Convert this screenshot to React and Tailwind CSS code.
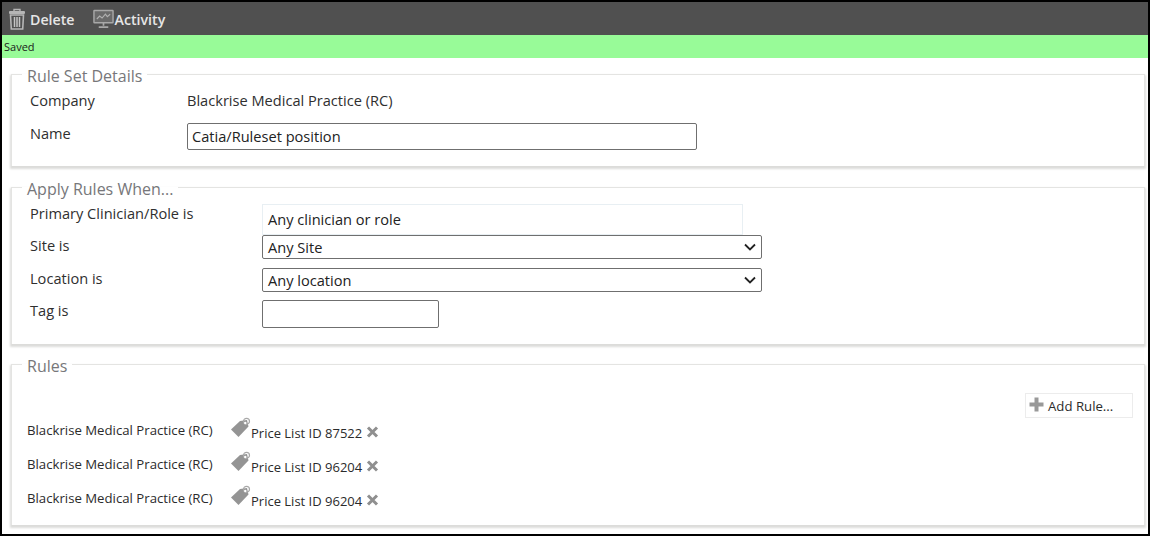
import React from "react";

function Trash() {
  return (
    <svg width="18" height="22" viewBox="0 0 18 22" className="shrink-0">
      <path d="M6 3V1.500h6V3" fill="none" stroke="#b5b5b5" strokeWidth="1.400" />
      <rect x="1" y="3" width="16" height="3" rx="1" fill="#b5b5b5" />
      <path d="M2.500 7h13l-.8 14H3.300z" fill="none" stroke="#b5b5b5" strokeWidth="1.600" />
      <path d="M6.500 9v10M9 9v10M11.500 9v10" stroke="#c4c4c4" strokeWidth="1.500" />
    </svg>
  );
}

function Monitor() {
  return (
    <svg width="21" height="20" viewBox="0 0 22 20" className="shrink-0">
      <rect x="1" y="1" width="20" height="13" rx="0.500" fill="#6a6a6a" stroke="#a8a8a8" strokeWidth="1.500" />
      <path d="M4 10l3-3 2.500 2L13 5l2 2.500L18 5" fill="none" stroke="#b0b0b0" strokeWidth="1.200" />
      <path d="M11 14v3M6 18.500h10" stroke="#a8a8a8" strokeWidth="1.800" />
    </svg>
  );
}

function Tag() {
  return (
    <svg width="21" height="21" viewBox="0 0 21 21" className="shrink-0 mb-[12px]">
      <path d="M10 4L17 3l1.500 6.500L8.500 20 1 12.500z" fill="#949494" />
      <circle cx="16.500" cy="4.300" r="3" fill="none" stroke="#a8a8a8" strokeWidth="1.200" />
      <circle cx="15.300" cy="6" r="1.200" fill="#ffffff" />
    </svg>
  );
}

function Cross() {
  return (
    <svg width="13" height="12" viewBox="0 0 13 12" className="block">
      <path d="M2 1.500l9 9M11 1.500l-9 9" stroke="#8f8f8f" strokeWidth="3" />
    </svg>
  );
}

function Plus() {
  return (
    <svg width="15" height="15" viewBox="0 0 15 15" className="shrink-0 mb-[3px]">
      <path d="M5.500 0.500h4v5h5v4h-5v5h-4v-5h-5v-4h5z" fill="#999999" />
    </svg>
  );
}

function Chevron() {
  return (
    <svg width="12" height="8" viewBox="0 0 12 8" className="shrink-0">
      <path d="M1 1.500l5 5 5-5" fill="none" stroke="#222222" strokeWidth="1.800" />
    </svg>
  );
}

function Section({ title, className, children }) {
  return (
    <fieldset className={"ml-[9px] mr-[3px] border border-[#e4e4e2] border-b-0 shadow-[0_2px_2px_1px_#dcdcda] bg-white " + className}>
      <legend className="ml-[10px] px-[5px] text-[16px] leading-[18px] text-[#77777a]">
        <span className="block translate-y-[2px]">{title}</span>
      </legend>
      {children}
    </fieldset>
  );
}

function SelectBox({ label }) {
  return (
    <div className="w-[500px] h-[24px] border border-[#6f6f6f] rounded-[2px] flex items-center justify-between pl-[5px] pr-[5px] text-[14.600px] text-[#222]">
      <span className="mt-[2px]">{label}</span>
      <Chevron />
    </div>
  );
}

function Rule({ id }) {
  return (
    <div className="flex items-center h-[34px] pl-[15px] text-[13px] text-[#2b2b2b]">
      <span className="w-[203px] text-[13.200px] -translate-y-[2px]">Blackrise Medical Practice (RC)</span>
      <Tag />
      <span className="mt-[1px]">Price List ID {id}</span>
      <span className="ml-[4px] mb-[2px]"><Cross /></span>
    </div>
  );
}

export default function App() {
  return (
    <div className="w-[1150px] h-[536px] overflow-hidden border-2 border-black bg-white font-['Open_Sans',sans-serif]">
      <div className="h-[33px] bg-[#505050] flex items-center pl-[6px] text-[14.200px] font-semibold text-[#e6e6e6]">
        <Trash />
        <span className="ml-[4px] mt-[2px]">Delete</span>
        <span className="ml-[18px]"><Monitor /></span>
        <span className="ml-[1px] mt-[2px]">Activity</span>
      </div>
      <div className="h-[23px] bg-[#98fb98] flex items-center pl-[2px] pt-[1px] text-[11px] text-[#1a1a1a]">Saved</div>

      <Section title="Rule Set Details" className="mt-[7px] h-[101px]">
        <div className="flex items-center h-[24px] pl-[18px] mt-[6px] text-[14.600px] text-[#2f2f2f]">
          <span className="w-[157px]">Company</span>
          <span>Blackrise Medical Practice (RC)</span>
        </div>
        <div className="flex items-start mt-[10px] pl-[18px] text-[14.600px] text-[#2f2f2f]">
          <span className="w-[157px]">Name</span>
          <div className="w-[510px] h-[27px] border border-[#6f6f6f] rounded-[2px] flex items-center pl-[4px] pt-[1px] text-[#222]">Catia/Ruleset position</div>
        </div>
      </Section>

      <Section title="Apply Rules When..." className="mt-[12px] h-[166px]">
        <div className="flex flex-col pl-[18px] mt-[5px] text-[14.600px] text-[#2f2f2f]">
          <div className="flex items-start h-[34px]">
            <span className="w-[232px] mt-[2px]">Primary Clinician/Role is</span>
            <div className="w-[481px] h-[31px] border border-[#e8eff3] flex items-center pl-[5px] mt-[3px] text-[#222]">Any clinician or role</div>
          </div>
          <div className="flex items-start h-[33px]">
            <span className="w-[232px]">Site is</span>
            <SelectBox label="Any Site" />
          </div>
          <div className="flex items-start h-[32px]">
            <span className="w-[232px]">Location is</span>
            <SelectBox label="Any location" />
          </div>
          <div className="flex items-start">
            <span className="w-[232px]">Tag is</span>
            <div className="w-[177px] h-[28px] border border-[#6f6f6f] rounded-[2px]" />
          </div>
        </div>
      </Section>

      <Section title="Rules" className="mt-[11px] h-[170px]">
        <div className="flex justify-end pr-[11px] mt-[20px]">
          <div className="w-[108px] h-[25px] border border-[#ececec] flex items-center pl-[3px] gap-[4px] text-[13.200px] text-[#2b2b2b]">
            <Plus />
            <span className="mt-[3px]">Add Rule...</span>
          </div>
        </div>
        <div className="mt-[-2px]">
          <Rule id="87522" />
          <Rule id="96204" />
          <Rule id="96204" />
        </div>
      </Section>
    </div>
  );
}
